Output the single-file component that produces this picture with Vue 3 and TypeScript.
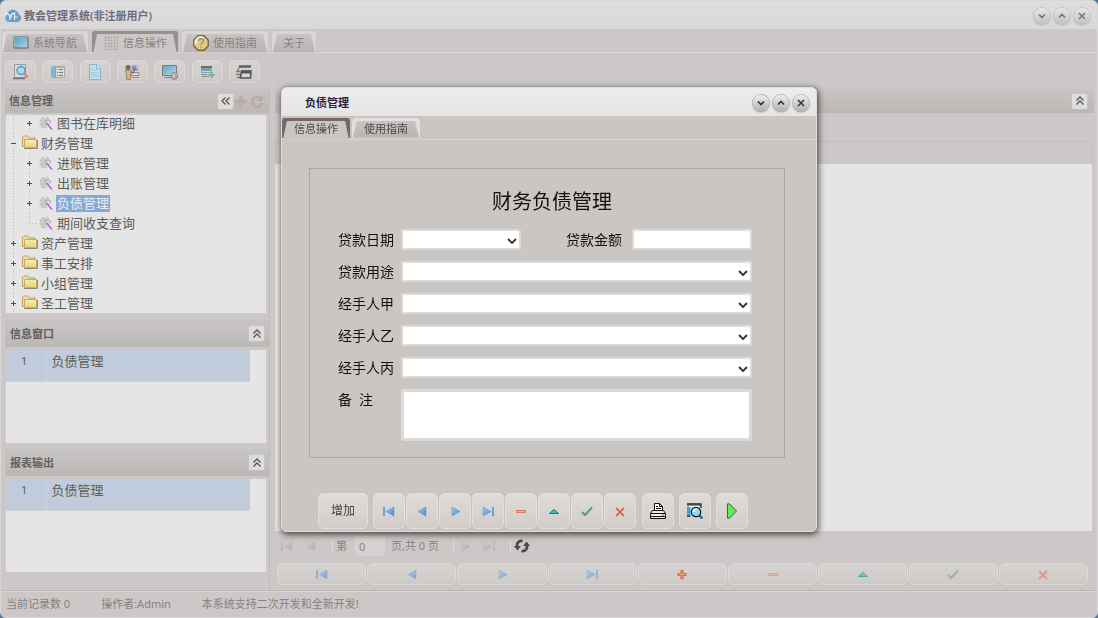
<script setup lang="ts">
import { ref } from 'vue'

interface TreeNode {
  label: string
  depth: number
  mark: string
}

const tabs = [
  { label: '系统导航', icon: 'screen' },
  { label: '信息操作', icon: 'grid' },
  { label: '使用指南', icon: 'help' },
  { label: '关于', icon: '' },
]
const activeTab = ref(1)

const tools = [
  { icon: 'find', label: '查找' },
  { icon: 'list', label: '列表' },
  { icon: 'page', label: '文档' },
  { icon: 'user', label: '用户' },
  { icon: 'world', label: '网络' },
  { icon: 'rowadd', label: '添加行' },
  { icon: 'windows', label: '窗口' },
]

const nodes: TreeNode[] = [
  { label: '图书在库明细', depth: 1, mark: '+' },
  { label: '财务管理', depth: 0, mark: '-' },
  { label: '进账管理', depth: 1, mark: '+' },
  { label: '出账管理', depth: 1, mark: '+' },
  { label: '负债管理', depth: 1, mark: '+' },
  { label: '期间收支查询', depth: 1, mark: '' },
  { label: '资产管理', depth: 0, mark: '+' },
  { label: '事工安排', depth: 0, mark: '+' },
  { label: '小组管理', depth: 0, mark: '+' },
  { label: '圣工管理', depth: 0, mark: '+' },
]
const selected = ref(4)

const lists = ['信息窗口', '报表输出']

const navigator = [
  { icon: 'first', label: '首条' },
  { icon: 'prev', label: '上一条' },
  { icon: 'next', label: '下一条' },
  { icon: 'last', label: '末条' },
  { icon: 'plus', label: '新增' },
  { icon: 'minus', label: '删除' },
  { icon: 'up', label: '编辑' },
  { icon: 'check', label: '保存' },
  { icon: 'cross', label: '取消' },
]
const dialogNavigator = navigator.filter((n) => n.icon !== 'plus')

const extras = [
  { icon: 'print', label: '打印' },
  { icon: 'preview', label: '预览' },
  { icon: 'run', label: '运行' },
]

const wideFields = [
  { id: 'purpose', label: '贷款用途' },
  { id: 'handler-a', label: '经手人甲' },
  { id: 'handler-b', label: '经手人乙' },
  { id: 'handler-c', label: '经手人丙' },
]

const controls = [
  { icon: 'w-min', label: '最小化' },
  { icon: 'w-max', label: '最大化' },
  { icon: 'w-close', label: '关闭' },
]
</script>

<template>
  <svg class="defs" aria-hidden="true">
    <defs>
      <linearGradient id="g-blue" x1="0" y1="0" x2="1" y2="1">
        <stop offset="0" stop-color="#a9cdf2" /><stop offset="1" stop-color="#3f86d6" />
      </linearGradient>
      <linearGradient id="g-screen" x1="0" y1="0" x2="1" y2="1">
        <stop offset="0" stop-color="#4d9cc9" /><stop offset="1" stop-color="#b5d6e6" />
      </linearGradient>
      <linearGradient id="g-folder" x1="0" y1="0" x2="0" y2="1">
        <stop offset="0" stop-color="#f3edb8" /><stop offset="1" stop-color="#e6d67f" />
      </linearGradient>
    </defs>
    <symbol id="i-logo" viewBox="0 0 16 16">
      <path d="M4 14a4 4 0 0 1-1.500-7.500A5 5 0 0 1 11 3a4.500 4.500 0 0 1 3 3.500A4 4 0 0 1 12.500 14z" fill="#6b9fbf" />
      <path d="M0 5.500c2.500-1 4 .5 5 3.500l2.500-3.500h3" fill="none" stroke="#e8f0f4" stroke-width="1.300" /><path d="M6.500 8L4.500 12M9.500 6.500V12M9.500 9h3" fill="none" stroke="#e8f0f4" stroke-width="1.200" />
    </symbol>
    <symbol id="i-screen" viewBox="0 0 16 16">
      <path d="M1 2h14v11H1z" fill="url(#g-screen)" stroke="#59656b" stroke-width="1" /><path d="M1.500 12.500v-10h13" fill="none" stroke="#b9cdd6" stroke-width=".6" />
    </symbol>
    <symbol id="i-grid" viewBox="0 0 16 16">
      <path d="M2.500 1v14M5.500 1v14M8.500 1v14M11.500 1v14M14.500 1v14M1 2.500h14M1 5.500h14M1 8.500h14M1 11.500h14M1 14.500h14" stroke="#b0aeae" stroke-width=".8" />
    </symbol>
    <symbol id="i-help" viewBox="0 0 16 16">
      <path d="M5 .8h6L15.200 5v6L11 15.200H5L.8 11V5z" fill="#e3ca78" stroke="#766152" stroke-width="1.400" />
      <path d="M3 9a5 5 0 0 1 7-6" stroke="#f3ecc4" stroke-width="2.500" fill="none" />
      <path d="M5.500 6c0-3 5-3 5 0 0 1.800-2.500 1.700-2.500 3.800M8 11.500v1.500" fill="none" stroke="#96969c" stroke-width="1.500" />
    </symbol>
    <symbol id="i-find" viewBox="0 0 16 16">
      <path d="M1.500.5h11v13h-11z" fill="#dcdfdf" stroke="#8b9193" /><path d="M0 14.500h12" stroke="#5d6568" stroke-width="1.500" />
      <circle cx="8" cy="6.500" r="4" fill="#a6dbed" stroke="#4193bd" stroke-width="1.500" />
      <path d="M11 9.500l3.500 4" stroke="#df7d62" stroke-width="2.800" />
    </symbol>
    <symbol id="i-list" viewBox="0 0 16 16">
      <path d="M1.500 2.500h13v11h-13z" fill="#dbdcdd" stroke="#a3a7a9" /><path d="M2 4h3v9H2z" fill="#6ab2d2" />
      <path d="M2 3h12M5.500 3v10" stroke="#8f9294" /><path d="M7 5.500h1M7 8.500h1M7 11.500h1M9 5.500h4M9 8.500h4M9 11.500h4" stroke="#77716e" />
    </symbol>
    <symbol id="i-page" viewBox="0 0 16 16">
      <path d="M2.500.5h7l4 4v11h-11z" fill="#cbe3ef" stroke="#79adcf" /><path d="M9.500.5v4h4" fill="#eef5f8" stroke="#79adcf" />
      <path d="M4 4.500h4M4 6.500h7M4 8.500h8M4 10.500h8M4 12.500h8" stroke="#9cc6de" />
    </symbol>
    <symbol id="i-user" viewBox="0 0 16 16">
      <path d="M8 1.500h6v5H8z" fill="#7772cf" stroke="#aba6aa" /><path d="M11 2h3v4z" fill="#d9b7d8" /><path d="M8 8.500h7v3H7zM8 13.500h7" fill="#d9d9dc" stroke="#83818a" />
      <circle cx="4" cy="3.500" r="2.500" fill="#5d5550" /><path d="M1 6.500h7L6.500 10v5.500h-4V10z" fill="#dbb17a" stroke="#8a6a48" stroke-width=".8" /><path d="M7 8l2 1 2-4" fill="none" stroke="#5a4b49" />
    </symbol>
    <symbol id="i-world" viewBox="0 0 16 16">
      <path d="M.5 1.500h14v10H.5z" fill="url(#g-screen)" stroke="#667078" /><path d="M2 13.500h7" stroke="#777" />
      <circle cx="12.500" cy="12" r="3.500" fill="#929bd0" stroke="#9c75a5" /><path d="M10 10l3 1-1 3zM13 9l2 2" fill="#b7d36b" stroke="#d1ca73" />
    </symbol>
    <symbol id="i-rowadd" viewBox="0 0 16 16">
      <path d="M2 2h11v2.500H2z" fill="#555a5e" /><path d="M2.500 6.500h10v2h-10z" fill="#b9dcea" stroke="#62a0c0" /><path d="M2 5.500h10M2 10.500h6M3 12.500h7" stroke="#7b8388" />
      <path d="M12.500 8v6M9.500 11h6" stroke="#6bb47d" stroke-width="2" />
    </symbol>
    <symbol id="i-windows" viewBox="0 0 16 16">
      <path d="M3 2.500h12" stroke="#484848" stroke-width="2.400" /><path d="M3.500 3L1 7.500h3M0 10.500h4M1 13.500h3" fill="none" stroke="#6a6868" stroke-width="1.300" />
      <path d="M5.500 7h9.500l-.5 7H4.500z" fill="#dadada" stroke="#3f3f3f" stroke-width="1.600" /><path d="M6 8h8.500" stroke="#444" stroke-width="3" />
    </symbol>
    <symbol id="i-folder" viewBox="0 0 16 16">
      <path d="M.5 11.500v-9l2-1.500h3L7 3h6v8.500z" fill="#eee2a1" stroke="#bd9c58" /><path d="M2.500 4.500h12v8h-12z" fill="url(#g-folder)" stroke="#c9a960" /><path d="M2 13.500h13.500V5" fill="none" stroke="#918b78" />
    </symbol>
    <symbol id="i-gear" viewBox="0 0 16 16">
      <path d="M2 5l2-1 1-2 2 2 3-2 1 3-2 3-1 5-2-1-2 1-1-3-2-1 2-1z" fill="#cbcaca" stroke="#bab8b8" stroke-width=".8" stroke-dasharray="2 1" />
      <path d="M7 5.500l6 .5-3 4z" fill="#e8e6e8" stroke="#a29ea4" stroke-width=".8" /><path d="M8.500 8l5.500 6.500" stroke="#b070d2" stroke-width="1.700" />
    </symbol>
    <symbol id="i-first" viewBox="0 0 16 16"><path d="M3 4v9" stroke="#4c8dda" stroke-width="1.500" /><path d="M13 4v9L5 8.500z" fill="url(#g-blue)" stroke="#4f8cd2" stroke-width=".5" /></symbol>
    <symbol id="i-prev" viewBox="0 0 16 16"><path d="M12 4v9L4 8.500z" fill="url(#g-blue)" stroke="#4f8cd2" stroke-width=".5" /></symbol>
    <symbol id="i-next" viewBox="0 0 16 16"><path d="M5 4v9l8-4.500z" fill="url(#g-blue)" stroke="#4f8cd2" stroke-width=".5" /></symbol>
    <symbol id="i-last" viewBox="0 0 16 16"><path d="M13 4v9" stroke="#4c8dda" stroke-width="1.500" /><path d="M3 4v9l8-4.500z" fill="url(#g-blue)" stroke="#4f8cd2" stroke-width=".5" /></symbol>
    <symbol id="i-plus" viewBox="0 0 16 16"><path d="M8 4v9M3.500 8.500h9" stroke="#cf5a36" stroke-width="3" /><path d="M8 5v7M4.500 8.500h7" stroke="#f1a87a" stroke-width="1" /></symbol>
    <symbol id="i-minus" viewBox="0 0 16 16"><path d="M3 7h10v3H3z" fill="#d87e5a" /><path d="M4 8.500h8" stroke="#efad85" /></symbol>
    <symbol id="i-up" viewBox="0 0 16 16"><path d="M3.500 10.500L8 6.500l4.500 4z" fill="#2bc2d2" stroke="#087f91" /></symbol>
    <symbol id="i-check" viewBox="0 0 16 16"><path d="M3 9l3 3 7-7.500" fill="none" stroke="#609a76" stroke-width="2" /></symbol>
    <symbol id="i-cross" viewBox="0 0 16 16"><path d="M4 5l8 8M12 5l-8 8" stroke="#d9665c" stroke-width="1.800" /></symbol>
    <symbol id="i-print" viewBox="0 0 16 16">
      <path d="M4.500 8V.5h5l3 3V8" fill="#fff" stroke="#111" /><path d="M9.500.5v3h3M6 3.500h2M6 5.500h5" fill="none" stroke="#111" />
      <path d="M2.500 7.500h11l2 3v5H.5v-5z" fill="#eee" stroke="#111" /><path d="M.5 10.500h15M1 13.500h14" stroke="#111" /><path d="M12 12h2" stroke="#d33" />
    </symbol>
    <symbol id="i-preview" viewBox="0 0 16 16">
      <path d="M0 .5h14v3H0z" fill="#8a8a8a" /><path d="M0 1h14v4M0 13h3.500" fill="none" stroke="#333" stroke-width="1.400" /><path d="M0 4h3.500v8H0z" fill="#33a6ee" /><path d="M2 3.500h10" stroke="#fff" />
      <circle cx="9" cy="9" r="4.700" fill="#8bd5fa" stroke="#111" stroke-width="1.200" /><path d="M6.500 9a2.500 2.500 0 0 1 3-2.500" stroke="#fff" stroke-width="1.800" fill="none" /><path d="M12.500 12.500l3 3" stroke="#1576a8" stroke-width="2.500" />
    </symbol>
    <symbol id="i-run" viewBox="0 0 16 16"><path d="M3.500.8h2l7 7.200-7 7.200h-2z" fill="#68e75e" stroke="#4c5e4c" /></symbol>
    <symbol id="i-w-min" viewBox="0 0 16 16"><path d="M5 6.500l3 3 3-3" fill="none" stroke="#333" stroke-width="1.700" /></symbol>
    <symbol id="i-w-max" viewBox="0 0 16 16"><path d="M5 9.500l3-3 3 3" fill="none" stroke="#333" stroke-width="1.700" /></symbol>
    <symbol id="i-w-close" viewBox="0 0 16 16"><path d="M5 5l6 6M11 5l-6 6" stroke="#333" stroke-width="1.500" /></symbol>
    <symbol id="i-fold" viewBox="0 0 16 16"><path d="M4.500 7.500L8 4l3.500 3.500M4.500 11.500L8 8l3.500 3.500" fill="none" stroke="#555" stroke-width="1.300" /></symbol>
    <symbol id="i-foldleft" viewBox="0 0 16 16"><path d="M7.500 4.500L4 8l3.500 3.500M11.500 4.500L8 8l3.500 3.500" fill="none" stroke="#555" stroke-width="1.300" /></symbol>
    <symbol id="i-add" viewBox="0 0 16 16"><path d="M8 3v11M2.500 8.500h11" stroke="#bca9a7" stroke-width="3.500" /></symbol>
    <symbol id="i-reload" viewBox="0 0 16 16"><path d="M11 5A5 5 0 1 0 13 10" fill="none" stroke="#b7a9a7" stroke-width="2.200" /><path d="M7.500 8h6V2z" fill="#b7a9a7" /></symbol>
    <symbol id="i-refresh" viewBox="0 0 16 16">
      <path d="M3.500 9.500A4.500 4.500 0 0 1 8.500 3M12.500 6.500A4.500 4.500 0 0 1 7.500 13" fill="none" stroke="#494949" stroke-width="2.600" /><path d="M0 8h7l-3.500 4.500zM16 8H9l3.500-4.500z" fill="#494949" />
    </symbol>
    <symbol id="i-arrow" viewBox="0 0 16 16"><path d="M4 6l4 4 4-4" fill="none" stroke="#333" stroke-width="1.800" /></symbol>
  </svg>

  <div class="window">
    <header class="titlebar">
      <svg class="icon"><use href="#i-logo" /></svg>
      <h1>教会管理系统(非注册用户)</h1>
      <div class="controls">
        <button v-for="c in controls" :key="c.icon" type="button" :aria-label="c.label"><svg class="icon"><use :href="'#i-' + c.icon" /></svg></button>
      </div>
    </header>

    <nav class="tabs main-tabs">
      <button v-for="(t, i) in tabs" :key="t.label" type="button" class="tab" :class="{ active: i === activeTab }" @click="activeTab = i">
        <svg v-if="t.icon" class="icon"><use :href="'#i-' + t.icon" /></svg>
        <span>{{ t.label }}</span>
      </button>
    </nav>

    <div class="toolbar">
      <button v-for="t in tools" :key="t.icon" type="button" class="raised tool" :aria-label="t.label"><svg class="icon"><use :href="'#i-' + t.icon" /></svg></button>
    </div>

    <div class="body">
      <aside class="sidebar">
        <section class="panel tree-panel">
          <header class="panel-head">
            <h2>信息管理</h2>
            <button type="button" class="fold" aria-label="收起"><svg class="icon"><use href="#i-foldleft" /></svg></button>
            <button type="button" class="bare" aria-label="添加"><svg class="icon"><use href="#i-add" /></svg></button>
            <button type="button" class="bare" aria-label="刷新"><svg class="icon"><use href="#i-reload" /></svg></button>
          </header>
          <ul class="tree">
            <li v-for="(n, i) in nodes" :key="n.label" :class="{ selected: i === selected }" @click="selected = i">
              <span v-if="n.depth" class="cell line"></span>
              <span class="cell" :class="{ line: n.mark !== '', corner: n.mark === '' }"><b v-if="n.mark" :class="n.mark === '+' ? 'mark plus' : 'mark'"></b></span>
              <svg class="icon"><use :href="n.depth ? '#i-gear' : '#i-folder'" /></svg>
              <span class="label">{{ n.label }}</span>
            </li>
          </ul>
        </section>
        <section v-for="l in lists" :key="l" class="panel list-panel">
          <header class="panel-head">
            <h2>{{ l }}</h2>
            <button type="button" class="fold" aria-label="收起"><svg class="icon"><use href="#i-fold" /></svg></button>
          </header>
          <div class="sheet">
            <table>
              <tbody><tr><td class="num">1</td><td>负债管理</td></tr></tbody>
            </table>
          </div>
        </section>
      </aside>

      <main class="content">
        <header class="panel-head">
          <button type="button" class="fold" aria-label="收起"><svg class="icon"><use href="#i-fold" /></svg></button>
        </header>
        <div class="spacer"></div>
        <div class="columns"></div>
        <div class="canvas"></div>
        <div class="pager">
          <button type="button" class="bare faded" aria-label="首页"><svg class="icon"><use href="#i-first" /></svg></button>
          <button type="button" class="bare faded" aria-label="上一页"><svg class="icon"><use href="#i-prev" /></svg></button>
          <i class="sep"></i>
          <label for="page-no">第</label>
          <input id="page-no" type="text" value="0" />
          <span class="total">页,共 0 页</span>
          <i class="sep"></i>
          <button type="button" class="bare faded" aria-label="下一页"><svg class="icon"><use href="#i-next" /></svg></button>
          <button type="button" class="bare faded" aria-label="末页"><svg class="icon"><use href="#i-last" /></svg></button>
          <i class="sep"></i>
          <button type="button" class="bare" aria-label="刷新"><svg class="icon"><use href="#i-refresh" /></svg></button>
        </div>
        <div class="navigator">
          <button v-for="n in navigator" :key="n.icon" type="button" class="raised" :aria-label="n.label"><svg class="icon" :class="n.icon"><use :href="'#i-' + n.icon" /></svg></button>
        </div>
      </main>
    </div>

    <footer class="status">
      <span>当前记录数 0</span><span>操作者:Admin</span><span>本系统支持二次开发和全新开发!</span>
    </footer>
  </div>

  <div class="overlay">
    <div class="dialog" role="dialog" aria-labelledby="dialog-title">
      <header class="dialog-title">
        <h2 id="dialog-title">负债管理</h2>
        <div class="controls">
          <button v-for="c in controls" :key="c.icon" type="button" :aria-label="c.label"><svg class="icon"><use :href="'#i-' + c.icon" /></svg></button>
        </div>
      </header>
      <nav class="tabs dialog-tabs">
        <button type="button" class="tab active"><span>信息操作</span></button>
        <button type="button" class="tab"><span>使用指南</span></button>
      </nav>
      <form class="form" @submit.prevent>
        <h3>财务负债管理</h3>
        <div class="row">
          <label for="date">贷款日期</label>
          <span class="select short"><select id="date"></select><svg class="icon"><use href="#i-arrow" /></svg></span>
          <label for="amount" class="second">贷款金额</label>
          <input id="amount" class="short" type="text" />
        </div>
        <div v-for="f in wideFields" :key="f.id" class="row">
          <label :for="f.id">{{ f.label }}</label>
          <span class="select"><select :id="f.id"></select><svg class="icon"><use href="#i-arrow" /></svg></span>
        </div>
        <div class="row">
          <label for="note">备&ensp;注</label>
          <textarea id="note"></textarea>
        </div>
      </form>
      <div class="actions">
        <button type="button" class="raised add">增加</button>
        <div class="group">
          <button v-for="n in dialogNavigator" :key="n.icon" type="button" class="raised" :aria-label="n.label"><svg class="icon"><use :href="'#i-' + n.icon" /></svg></button>
        </div>
        <button v-for="e in extras" :key="e.icon" type="button" class="raised" :aria-label="e.label"><svg class="icon"><use :href="'#i-' + e.icon" /></svg></button>
      </div>
    </div>
  </div>
</template>

<style>
html {
  background: #56779a;
}
body {
  margin: 0;
}
</style>

<style scoped>
.defs {
  position: absolute;
  width: 0;
  height: 0;
}
.window,
.overlay {
  font-family: "Noto Sans", "Noto Sans CJK SC", sans-serif;
  font-size: 11px;
  line-height: 16px;
  color: #858282;
}
.window *,
.overlay * {
  box-sizing: border-box;
}
button,
input,
select,
textarea {
  font: inherit;
  color: inherit;
  margin: 0;
  padding: 0;
}
button {
  display: flex;
  align-items: center;
  justify-content: center;
  border: 0;
  background: none;
}
h1,
h2,
h3,
ul {
  margin: 0;
  padding: 0;
  font-size: inherit;
}
.icon {
  width: 16px;
  height: 16px;
  flex: none;
  display: block;
}
.window {
  box-sizing: border-box;
  height: 100vh;
  display: flex;
  flex-direction: column;
  border: 1px solid #d8d6d6;
  border-radius: 6px;
  background: #cdc8c7;
  overflow: hidden;
}
.titlebar {
  flex: none;
  height: 28px;
  padding: 2px 7px 0 4px;
  display: flex;
  align-items: center;
  gap: 3px;
  background: linear-gradient(#dfdede, #d9d8d8);
}
.titlebar h1 {
  flex: 1;
  color: #6f6b7c;
  font-weight: 600;
}
.controls {
  display: flex;
  gap: 4px;
}
.controls button {
  width: 16px;
  height: 16px;
  border-radius: 50%;
  background: linear-gradient(#eeeded, #b5b1b0);
  box-shadow: 0 0 0 1px #b9b6b5, 0 1px 2px #777;
}
.titlebar .controls {
  opacity: 0.6;
}
.tabs {
  display: flex;
  flex: none;
  box-shadow: inset 0 -1px #d9d5d3;
}
.main-tabs {
  height: 24px;
  padding: 2px 1px 1px;
  gap: 4px;
}
.tab {
  position: relative;
  gap: 4px;
  border-radius: 3px 3px 0 0;
  background: #d9d6d5;
  box-shadow: 0 0 1px #aaa5a4;
}
.tab::before {
  content: "";
  position: absolute;
  inset: 3px 1px 0;
  background: linear-gradient(#c8c4c3, #b8b4b3);
  clip-path: polygon(4px 0, calc(100% - 4px) 0, 100% 100%, 0 100%);
}
.tab > * {
  position: relative;
}
.main-tabs .tab {
  padding: 2px 11px 0;
}
.tab.active {
  background: #998e8f;
}
.tab.active::before {
  background: #cdc8c7;
  bottom: -2px;
}
.toolbar {
  display: flex;
  flex: none;
  justify-content: space-between;
  width: 263px;
  padding: 7px 4px 6px;
}
.raised {
  border: 1px solid #dcd9d7;
  border-radius: 5px;
  background: linear-gradient(#d6d4d2, #cdcac7);
  box-shadow: 0 0 1px #b2adab;
}
.tool {
  width: 31px;
  height: 23px;
}
.tool .icon {
  opacity: 0.85;
}
.body {
  flex: 1;
  min-height: 0;
  display: flex;
  gap: 5px;
  padding: 0 3px 0 4px;
  border-bottom: 1px solid #b9b5b4;
  box-shadow: 0 1px #dad7d6;
}
.sidebar {
  width: 265px;
  flex: none;
  display: flex;
  flex-direction: column;
  padding-bottom: 18px;
  border-right: 1px solid #c1bcbb;
}
.panel {
  display: flex;
  flex-direction: column;
}
.tree-panel {
  flex: 1 1 0;
  min-height: 0;
}
.panel-head {
  flex: none;
  height: 27px;
  display: flex;
  align-items: center;
  padding: 0 5px;
  background: linear-gradient(#c7c5c4, #bbb7b5);
}
.tree-panel .panel-head {
  height: 24px;
  padding: 0 4px;
}
.panel-head h2 {
  flex: 1;
  color: #625f5f;
  font-weight: 600;
}
.fold {
  width: 15px;
  height: 15px;
  border-radius: 2px;
  background: #dddddc;
  box-shadow: 0 0 1px #eee;
}
.tree {
  flex: 1;
  min-height: 0;
  margin: 2px 3px 1px 1px;
  background: #e5e5e5;
  list-style: none;
  display: flex;
  flex-direction: column;
  justify-content: flex-end;
  overflow: hidden;
  font-size: 13px;
  color: #5d5c5c;
}
.tree li {
  flex: none;
  height: 20px;
  display: flex;
  align-items: center;
}
.cell {
  width: 16px;
  height: 20px;
  display: flex;
  align-items: center;
  justify-content: center;
}
.line {
  background: repeating-linear-gradient(#bcbaba 0 1px, transparent 1px 3px) 7px 0 / 1px 100% no-repeat;
}
.corner {
  background: repeating-linear-gradient(#bcbaba 0 1px, transparent 1px 3px) 7px 0 / 1px 10px no-repeat, repeating-linear-gradient(90deg, #bcbaba 0 1px, transparent 1px 3px) 7px 10px / 8px 1px no-repeat;
}
.mark {
  width: 9px;
  height: 9px;
  margin-right: 1px;
  background: linear-gradient(#4d4d4d, #4d4d4d) 2px 4px / 5px 1px no-repeat, #e5e5e5;
}
.mark.plus {
  background: linear-gradient(#4d4d4d, #4d4d4d) 2px 4px / 5px 1px no-repeat, linear-gradient(#4d4d4d, #4d4d4d) 4px 2px / 1px 5px no-repeat, #e5e5e5;
}
.label {
  margin-left: 2px;
  padding: 0 1px;
  line-height: 17px;
}
.selected .label {
  background: #86a9d1;
  color: #e8edf3;
}
.list-panel {
  padding-top: 6px;
}
.list-panel .panel-head {
  padding: 0 5px;
}
.sheet {
  height: 93px;
  margin: 3px 3px 0 1px;
  background: #e5e5e5;
}
.sheet table {
  width: calc(100% - 16px);
  border-collapse: collapse;
  background: #c0cbdb;
  font-size: 13px;
  color: #5d5e60;
}
.sheet td {
  height: 31px;
  padding: 3px 5px 0;
  vertical-align: top;
  border-bottom: 1px solid #d2d2d5;
}
.sheet .num {
  width: 40px;
  padding: 3px 3px 0 0;
  text-align: center;
  font-size: 11px;
  border-right: 1px solid #cfd5de;
}
.content {
  flex: 1;
  min-width: 0;
  display: flex;
  flex-direction: column;
}
.content > .panel-head {
  height: 24px;
  justify-content: flex-end;
}
.content > .panel-head .fold {
  margin-right: 2px;
}
.spacer {
  height: 28px;
  flex: none;
}
.columns {
  height: 23px;
  flex: none;
  border: 1px solid #c3bebd;
  border-bottom: 0;
  margin-right: 2px;
}
.canvas {
  flex: 1;
  background: #e5e5e5;
  margin-right: 2px;
}
.pager {
  flex: none;
  height: 32px;
  display: flex;
  align-items: center;
  padding: 0 4px 2px;
}
.pager .bare + .bare {
  margin-left: 8px;
}
.faded {
  opacity: 0.3;
  filter: grayscale(1);
}
.sep {
  width: 1px;
  height: 14px;
  margin: 0 3px;
  background: #dedbda;
}
.pager .bare + .sep {
  margin-left: 13px;
}
.pager label {
  margin-right: 8px;
}
.pager input {
  width: 30px;
  height: 20px;
  padding: 0 4px;
  border: 0;
  border-radius: 2px;
  background: #d4d2d1;
}
.total {
  margin: 0 11px 0 6px;
}
.navigator {
  flex: none;
  display: flex;
  gap: 1px;
  padding: 0 6px 5px 2px;
}
.navigator .raised {
  flex: 1;
  height: 22px;
}
.navigator .icon {
  opacity: 0.6;
}
.navigator .plus {
  opacity: 0.9;
}
.navigator .minus,
.navigator .check,
.navigator .cross {
  opacity: 0.5;
}
.status {
  flex: none;
  height: 26px;
  display: flex;
  align-items: center;
  gap: 31px;
  padding-left: 5px;
}
.overlay {
  position: fixed;
  inset: 0;
  display: grid;
  place-items: center;
}
.dialog {
  width: 536px;
  border: 1px solid #e1dddb;
  border-radius: 5px;
  background: #ccc6c3;
  box-shadow: 0 0 1px #666, 1px 2px 7px rgba(0, 0, 0, 0.75);
}
.dialog-title {
  display: flex;
  align-items: center;
  height: 28px;
  padding: 2px 7px 0 23px;
  border-radius: 4px 4px 0 0;
  background: linear-gradient(#ededed, #e5e5e5);
}
.dialog-title h2 {
  flex: 1;
  color: #28203c;
  font-weight: 600;
}
.dialog-tabs {
  height: 24px;
  padding: 2px 0 2px;
  gap: 2px;
  color: #4c4949;
}
.dialog-tabs .tab {
  width: 68px;
  padding-top: 3px;
  background: #e3dedb;
}
.dialog-tabs .tab.active {
  background: #75676a;
}
.dialog-tabs .tab.active::before {
  background: #ccc6c3;
}
.form {
  margin: 28px 31px 0 27px;
  padding: 21px 32px 16px 28px;
  border: 1px solid #aaa6a4;
  color: #111;
  font-size: 14px;
  display: flex;
  flex-direction: column;
  gap: 11px;
}
.form h3 {
  padding-left: 14px;
  margin-bottom: 4px;
  text-align: center;
  font-size: 20px;
  font-weight: 400;
  line-height: 24px;
}
.row {
  display: flex;
}
.row label {
  width: 63px;
  flex: none;
  line-height: 21px;
}
.row .second {
  width: 66px;
  margin-left: auto;
}
.select {
  position: relative;
  flex: 1;
}
.row .short {
  flex: 0 0 120px;
}
.row input,
.row select,
.row textarea {
  display: block;
  width: 100%;
  height: 21px;
  appearance: none;
  border: 2px solid #dcdbdb;
  border-radius: 3px;
  background: #fff;
  outline: 0;
}
.row input {
  width: 120px;
}
.row textarea {
  flex: 1;
  height: 52px;
  border-width: 3px;
  resize: none;
}
.select .icon {
  position: absolute;
  right: 1px;
  top: 4px;
  pointer-events: none;
}
.actions {
  display: flex;
  gap: 5px;
  padding: 35px 36px 2px;
}
.group {
  display: flex;
  gap: 1px;
  margin-right: 1px;
}
.actions .raised {
  width: 32px;
  height: 36px;
  border-color: #e2dfdc;
  background: linear-gradient(#dfdcd9, #d1ccc7);
}
.actions .add {
  width: 50px;
  font-size: 12px;
  color: #444;
}
</style>
